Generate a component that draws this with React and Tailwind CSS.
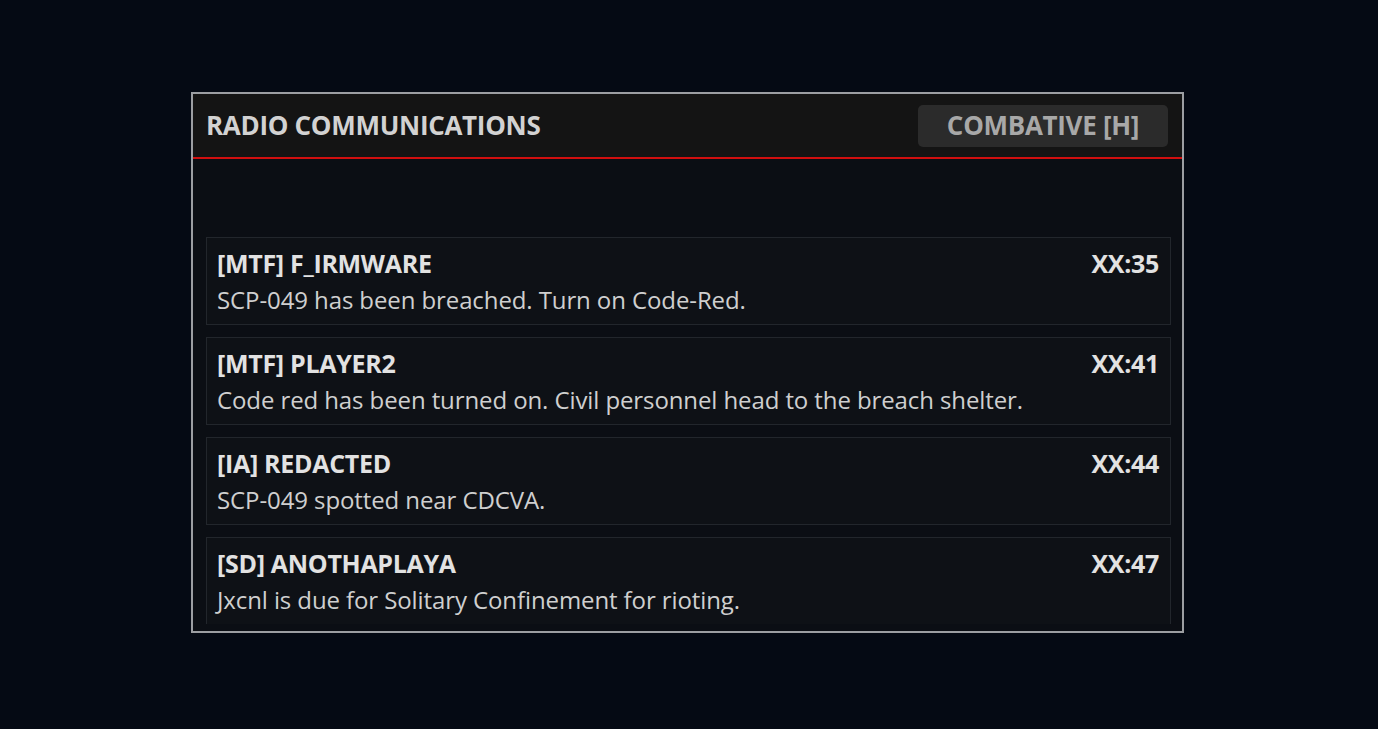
import React from 'react';

const messages = [
  { name: '[MTF] F_IRMWARE', time: 'XX:35', text: 'SCP-049 has been breached. Turn on Code-Red.' },
  { name: '[MTF] PLAYER2', time: 'XX:41', text: 'Code red has been turned on. Civil personnel head to the breach shelter.' },
  { name: '[IA] REDACTED', time: 'XX:44', text: 'SCP-049 spotted near CDCVA.' },
  { name: '[SD] ANOTHAPLAYA', time: 'XX:47', text: 'Jxcnl is due for Solitary Confinement for rioting.' },
];

export default function App() {
  return (
    <div className="w-full h-[729px] bg-[#050a14] pt-[92px] pl-[191px] font-['Open_Sans',sans-serif]">
      <div className="w-[993px] h-[541px] border-2 border-[#9c9ea2] bg-[#0b0e14] flex flex-col overflow-hidden">
        {/* Header */}
        <div className="h-[65px] shrink-0 bg-[#141414] border-b-2 border-[#d10f0f] flex items-center justify-between pl-[13px] pr-[14px]">
          <h1 className="text-[26px] font-bold text-[#d2d2d2] tracking-[-0.3px]">RADIO COMMUNICATIONS</h1>
          <button className="h-[42px] w-[250px] rounded-[5px] bg-[#2b2b2b] text-[26px] font-bold text-[#a8a8a8] tracking-[-0.3px]">
            COMBATIVE [H]
          </button>
        </div>

        {/* Messages */}
        <div className="flex-1 min-h-0 pb-[7px]">
          <div className="h-full overflow-hidden pt-[78px] pl-[13px] pr-[11px] flex flex-col gap-[12px]">
            {messages.map((m) => (
              <div key={m.time} className="h-[88px] shrink-0 border border-[#22262c] bg-[#0e1116] pl-[10px] pr-[11px] pt-[10px]">
                <div className="flex justify-between items-center leading-[30px]">
                  <span className="text-[25px] font-bold text-[#e2e2e2] tracking-[-0.3px]">{m.name}</span>
                  <span className="text-[25px] font-bold text-[#e2e2e2] tracking-[-0.3px]">{m.time}</span>
                </div>
                <p className="mt-[6px] text-[24px] text-[#cfcfcf] leading-[32px] tracking-[-0.1px]">{m.text}</p>
              </div>
            ))}
          </div>
        </div>
      </div>
    </div>
  );
}
